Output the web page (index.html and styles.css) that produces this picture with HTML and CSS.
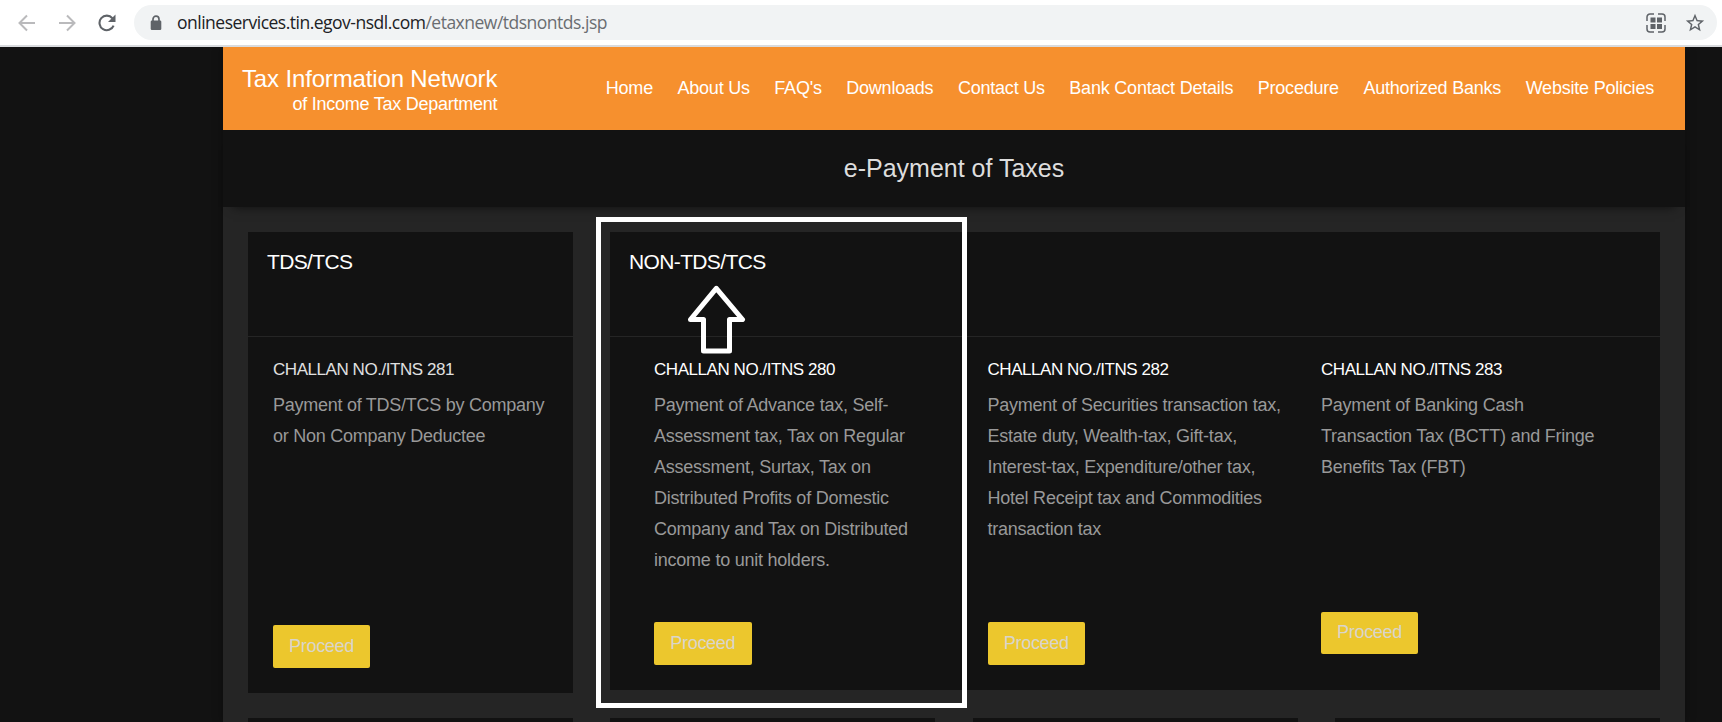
FILE: index.html
```html
<!DOCTYPE html>
<html lang="en">
<head>
<meta charset="utf-8">
<title>e-Payment of Taxes</title>
<link rel="stylesheet" href="styles.css">
</head>
<body>
<div class="toolbar">
  <svg class="nav-icon back" viewBox="0 0 18 18"><path d="M17 9H2M9 1.5L1.5 9L9 16.500"/></svg>
  <svg class="nav-icon forward" viewBox="0 0 18 18"><path d="M1 9H16M9 1.5L16.500 9L9 16.500"/></svg>
  <svg class="reload" viewBox="0 0 18 18"><path class="arc" d="M14.400 4.200A7.300 7.300 0 1 0 15.600 11.600"/><path class="tip" d="M17.500 0.500V8H10Z"/></svg>
  <div class="omnibox">
    <svg class="lock" viewBox="0 0 12 16"><path class="shackle" d="M3 6.500V4.200A3 3 0 0 1 9 4.200V6.500"/><rect x="0.700" y="5.500" width="10.600" height="9.500" rx="1.200"/></svg>
    <span class="url">onlineservices.tin.egov-nsdl.com<span class="path">/etaxnew/tdsnontds.jsp</span></span>
    <svg class="qr" viewBox="0 0 20 20"><path d="M1 8V4A3 3 0 0 1 4 1H8M12 1H16A3 3 0 0 1 19 4V8M19 12V16A3 3 0 0 1 16 19H12M8 19H4A3 3 0 0 1 1 16V12"/><g><rect x="4.500" y="4.500" width="5" height="5"/><rect x="11" y="4.500" width="5" height="5"/><rect x="4.500" y="11" width="5" height="5"/><rect x="11" y="11" width="5" height="5"/></g></svg>
    <svg class="star" viewBox="0 0 24 24"><path d="M22 9.240l-7.190-.62L12 2 9.190 8.630 2 9.240l5.460 4.730L5.820 21 12 17.270 18.180 21l-1.630-7.030L22 9.240zM12 15.400l-3.760 2.270 1-4.280-3.320-2.880 4.380-.38L12 6.100l1.710 4.040 4.380.38-3.320 2.880 1 4.280L12 15.400z"/></svg>
  </div>
</div>
<div class="page">
  <div class="container">
    <header class="site-header">
      <div class="brand"><div class="brand-main">Tax Information Network</div><div class="brand-sub">of Income Tax Department</div></div>
      <nav class="menu"><a>Home</a><a>About Us</a><a>FAQ's</a><a>Downloads</a><a>Contact Us</a><a>Bank Contact Details</a><a>Procedure</a><a>Authorized Banks</a><a>Website Policies</a></nav>
    </header>
    <h1 class="title">e-Payment of Taxes</h1>
    <main class="cards">
      <section class="card card-tds">
        <h2>TDS/TCS</h2>
        <div class="challans">
          <article class="challan muted"><h3>CHALLAN NO./ITNS 281</h3><p>Payment of TDS/TCS by Company<br>or Non Company Deductee</p><button>Proceed</button></article>
        </div>
      </section>
      <section class="card card-non">
        <h2>NON-TDS/TCS</h2>
        <div class="challans">
          <article class="challan"><h3>CHALLAN NO./ITNS 280</h3><p>Payment of Advance tax, Self-<br>Assessment tax, Tax on Regular<br>Assessment, Surtax, Tax on<br>Distributed Profits of Domestic<br>Company and Tax on Distributed<br>income to unit holders.</p><button>Proceed</button></article>
          <article class="challan"><h3>CHALLAN NO./ITNS 282</h3><p>Payment of Securities transaction tax,<br>Estate duty, Wealth-tax, Gift-tax,<br>Interest-tax, Expenditure/other tax,<br>Hotel Receipt tax and Commodities<br>transaction tax</p><button>Proceed</button></article>
          <article class="challan raised"><h3>CHALLAN NO./ITNS 283</h3><p>Payment of Banking Cash<br>Transaction Tax (BCTT) and Fringe<br>Benefits Tax (FBT)</p><button>Proceed</button></article>
        </div>
      </section>
    </main>
    <div class="more"><div></div><div></div><div></div><div></div></div>
  </div>
</div>
<div class="highlight"></div>
<svg class="pointer" viewBox="0 0 60 72"><path d="M30.300 6.300L56.500 37.500H43.500V69H17.500V37.500H4.500Z"/></svg>
</body>
</html>
```
FILE: styles.css
```css
* { box-sizing: border-box; }
body {
  margin: 0;
  height: 722px;
  overflow: hidden;
  position: relative;
  background: #121212;
  font-family: "Liberation Sans", Arial, sans-serif;
}
h1, h2, h3, p { margin: 0; font-weight: 400; }

.toolbar {
  height: 47px;
  display: flex;
  align-items: center;
  background: #fff;
  border-bottom: 2px solid #d9dbde;
  padding: 0 5px 0 18px;
}
.nav-icon { width: 18px; height: 18px; fill: none; stroke: #bababc; stroke-width: 2; }
.forward { margin-left: 22px; }
.reload { width: 18px; height: 18px; margin-left: 22px; }
.reload .arc { fill: none; stroke: #5f6368; stroke-width: 2.1; }
.reload .tip { fill: #5f6368; }
.omnibox {
  flex: 1;
  height: 35px;
  margin-left: 18px;
  border-radius: 18px;
  background: #f1f3f4;
  display: flex;
  align-items: center;
  padding: 0 11px 0 16px;
}
.lock { width: 12px; height: 16px; fill: #5f6368; }
.shackle { fill: none; stroke: #5f6368; stroke-width: 1.7; }
.url {
  flex: 1;
  margin-left: 15px;
  font: 17.5px/35px "Open Sans", "Noto Sans", sans-serif;
  letter-spacing: -0.5px;
  color: #202124;
  white-space: nowrap;
}
.path { color: #6a6d71; }
.qr { width: 20px; height: 20px; margin-right: 18px; fill: #5f6368; }
.qr path { fill: none; stroke: #5f6368; stroke-width: 1.5; }
.star { width: 22px; height: 22px; fill: #5f6368; }

.page { height: 675px; overflow: hidden; padding: 0 37px 0 223px; }
.container { height: 675px; background: #252525; box-shadow: 0 0 10px rgba(0, 0, 0, .35); }
.site-header {
  height: 83px;
  background: #f6902e;
  color: #fff;
  display: flex;
  justify-content: space-between;
  padding: 0 31px 0 19px;
}
.brand { text-align: right; padding-top: 18px; }
.brand-main { font-size: 24px; line-height: 28px; letter-spacing: -.15px; }
.brand-sub { font-size: 18px; line-height: 22px; letter-spacing: -.25px; }
.menu { display: flex; gap: 24.5px; padding-top: 31px; font-size: 18px; line-height: 20px; letter-spacing: -.21px; white-space: nowrap; }
.title {
  height: 77px;
  background: #121212;
  color: #ddd;
  font-size: 25px;
  line-height: 76px;
  text-align: center;
  box-shadow: 0 10px 10px -10px rgba(0, 0, 0, .6);
}
.cards { height: 511px; padding: 25px 25px 0; display: flex; gap: 37px; align-items: flex-start; }
.card { background: #121212; }
.card-tds { width: 325px; height: 461px; }
.card-non { width: 1050px; height: 458px; }
.card h2 {
  height: 105px;
  border-bottom: 1px solid #252525;
  padding: 18px 0 0 19px;
  color: #fff;
  font-size: 21px;
  line-height: 24px;
  letter-spacing: -.63px;
}
.challans { display: flex; height: calc(100% - 105px); padding: 0 0 25px 44px; }
.card-tds .challans { padding-left: 25px; }
.challan {
  width: 333.5px;
  flex: none;
  display: flex;
  flex-direction: column;
  align-items: flex-start;
  padding-top: 23px;
  white-space: nowrap;
}
.card-tds .challan { width: 275px; }
.challan h3 { color: #fff; font-size: 17px; line-height: 20px; letter-spacing: -.44px; }
.muted h3 { color: #e0e0e0; }
.challan p { margin-top: 10px; color: #999; font-size: 18px; line-height: 31px; letter-spacing: -.235px; }
.muted p { letter-spacing: -.26px; }
.challan button {
  margin-top: auto;
  width: 97.5px;
  height: 43px;
  border: 0;
  border-radius: 2px;
  padding: 0 0 1px;
  background: #ecc72d;
  color: #d9d5cb;
  font: 18px "Liberation Sans", Arial, sans-serif;
  letter-spacing: -.3px;
}
.muted button { width: 97px; }
.raised { padding-bottom: 11px; }
.raised button { width: 97px; height: 42px; }
.more { display: grid; grid-template-columns: repeat(4, 325px); justify-content: space-between; padding: 0 25px; }
.more div { height: 10px; background: #121212; }

.highlight { position: absolute; left: 596px; top: 217px; width: 371px; height: 491px; border: 5px solid #fff; }
.pointer { position: absolute; left: 686px; top: 282px; width: 60px; height: 72px; fill: none; stroke: #fff; stroke-width: 5; stroke-linejoin: round; }
```
